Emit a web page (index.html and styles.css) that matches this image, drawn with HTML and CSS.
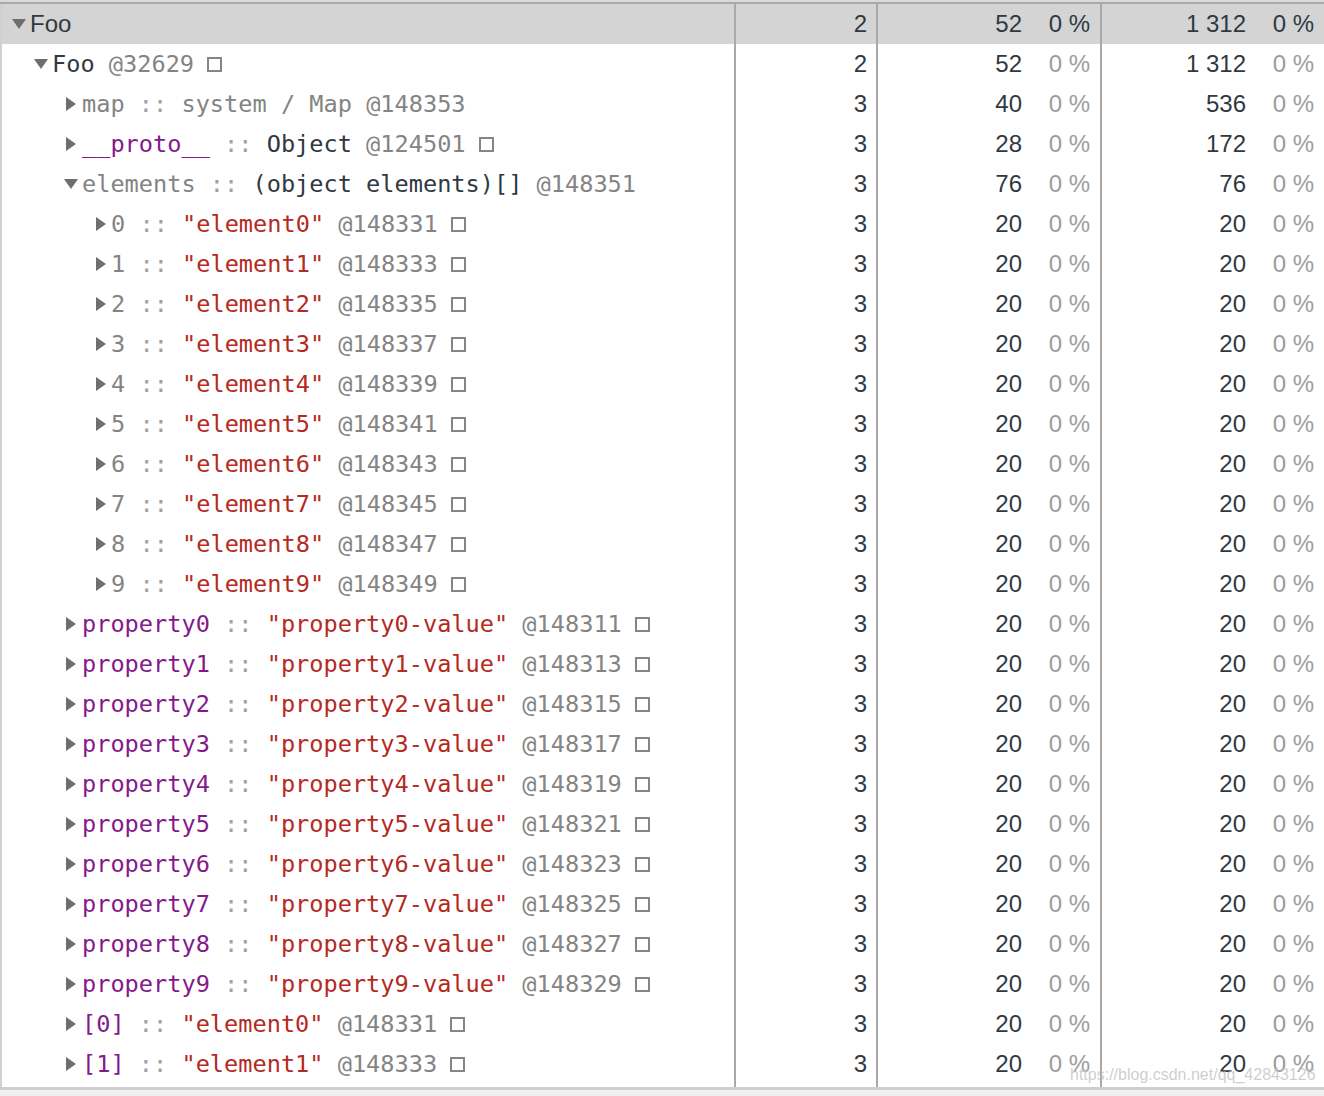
FILE: index.html
```html
<!DOCTYPE html>
<html>
<head>
<meta charset="utf-8">
<link rel="stylesheet" href="styles.css">
</head>
<body>
<div class="page">
  <div class="topline"></div>
  <div class="grid">
    <div class="row sel">
      <div class="name l0"><span class="tri down"><svg width="14" height="10" viewBox="0 0 14 10"><path d="M0 0H14L7 10Z"/></svg></span><span class="sans">Foo</span></div>
      <div class="num">2</div>
      <div class="num"><span>52</span><span class="pct">0 %</span></div>
      <div class="num"><span>1 312</span><span class="pct">0 %</span></div>
    </div>
    <div class="row">
      <div class="name l1"><span class="tri down"><svg width="14" height="10" viewBox="0 0 14 10"><path d="M0 0H14L7 10Z"/></svg></span><span class="dk">Foo</span><span class="gy"> @32629</span><span class="sq"></span></div>
      <div class="num">2</div>
      <div class="num"><span>52</span><span class="pct">0 %</span></div>
      <div class="num"><span>1 312</span><span class="pct">0 %</span></div>
    </div>
    <div class="row">
      <div class="name l2"><span class="tri right"><svg width="10" height="14" viewBox="0 0 10 14"><path d="M0 0L10 7L0 14Z"/></svg></span><span class="gy">map</span><span class="sep"> :: </span><span class="gy">system / Map</span><span class="gy"> @148353</span></div>
      <div class="num">3</div>
      <div class="num"><span>40</span><span class="pct">0 %</span></div>
      <div class="num"><span>536</span><span class="pct">0 %</span></div>
    </div>
    <div class="row">
      <div class="name l2"><span class="tri right"><svg width="10" height="14" viewBox="0 0 10 14"><path d="M0 0L10 7L0 14Z"/></svg></span><span class="pu">__proto__</span><span class="sep"> :: </span><span class="dk">Object</span><span class="gy"> @124501</span><span class="sq"></span></div>
      <div class="num">3</div>
      <div class="num"><span>28</span><span class="pct">0 %</span></div>
      <div class="num"><span>172</span><span class="pct">0 %</span></div>
    </div>
    <div class="row">
      <div class="name l2"><span class="tri down"><svg width="14" height="10" viewBox="0 0 14 10"><path d="M0 0H14L7 10Z"/></svg></span><span class="gy">elements</span><span class="sep"> :: </span><span class="dk">(object elements)[]</span><span class="gy"> @148351</span></div>
      <div class="num">3</div>
      <div class="num"><span>76</span><span class="pct">0 %</span></div>
      <div class="num"><span>76</span><span class="pct">0 %</span></div>
    </div>
    <div class="row">
      <div class="name l3"><span class="tri right"><svg width="10" height="14" viewBox="0 0 10 14"><path d="M0 0L10 7L0 14Z"/></svg></span><span class="gy">0</span><span class="sep"> :: </span><span class="rd">"element0"</span><span class="gy"> @148331</span><span class="sq"></span></div>
      <div class="num">3</div>
      <div class="num"><span>20</span><span class="pct">0 %</span></div>
      <div class="num"><span>20</span><span class="pct">0 %</span></div>
    </div>
    <div class="row">
      <div class="name l3"><span class="tri right"><svg width="10" height="14" viewBox="0 0 10 14"><path d="M0 0L10 7L0 14Z"/></svg></span><span class="gy">1</span><span class="sep"> :: </span><span class="rd">"element1"</span><span class="gy"> @148333</span><span class="sq"></span></div>
      <div class="num">3</div>
      <div class="num"><span>20</span><span class="pct">0 %</span></div>
      <div class="num"><span>20</span><span class="pct">0 %</span></div>
    </div>
    <div class="row">
      <div class="name l3"><span class="tri right"><svg width="10" height="14" viewBox="0 0 10 14"><path d="M0 0L10 7L0 14Z"/></svg></span><span class="gy">2</span><span class="sep"> :: </span><span class="rd">"element2"</span><span class="gy"> @148335</span><span class="sq"></span></div>
      <div class="num">3</div>
      <div class="num"><span>20</span><span class="pct">0 %</span></div>
      <div class="num"><span>20</span><span class="pct">0 %</span></div>
    </div>
    <div class="row">
      <div class="name l3"><span class="tri right"><svg width="10" height="14" viewBox="0 0 10 14"><path d="M0 0L10 7L0 14Z"/></svg></span><span class="gy">3</span><span class="sep"> :: </span><span class="rd">"element3"</span><span class="gy"> @148337</span><span class="sq"></span></div>
      <div class="num">3</div>
      <div class="num"><span>20</span><span class="pct">0 %</span></div>
      <div class="num"><span>20</span><span class="pct">0 %</span></div>
    </div>
    <div class="row">
      <div class="name l3"><span class="tri right"><svg width="10" height="14" viewBox="0 0 10 14"><path d="M0 0L10 7L0 14Z"/></svg></span><span class="gy">4</span><span class="sep"> :: </span><span class="rd">"element4"</span><span class="gy"> @148339</span><span class="sq"></span></div>
      <div class="num">3</div>
      <div class="num"><span>20</span><span class="pct">0 %</span></div>
      <div class="num"><span>20</span><span class="pct">0 %</span></div>
    </div>
    <div class="row">
      <div class="name l3"><span class="tri right"><svg width="10" height="14" viewBox="0 0 10 14"><path d="M0 0L10 7L0 14Z"/></svg></span><span class="gy">5</span><span class="sep"> :: </span><span class="rd">"element5"</span><span class="gy"> @148341</span><span class="sq"></span></div>
      <div class="num">3</div>
      <div class="num"><span>20</span><span class="pct">0 %</span></div>
      <div class="num"><span>20</span><span class="pct">0 %</span></div>
    </div>
    <div class="row">
      <div class="name l3"><span class="tri right"><svg width="10" height="14" viewBox="0 0 10 14"><path d="M0 0L10 7L0 14Z"/></svg></span><span class="gy">6</span><span class="sep"> :: </span><span class="rd">"element6"</span><span class="gy"> @148343</span><span class="sq"></span></div>
      <div class="num">3</div>
      <div class="num"><span>20</span><span class="pct">0 %</span></div>
      <div class="num"><span>20</span><span class="pct">0 %</span></div>
    </div>
    <div class="row">
      <div class="name l3"><span class="tri right"><svg width="10" height="14" viewBox="0 0 10 14"><path d="M0 0L10 7L0 14Z"/></svg></span><span class="gy">7</span><span class="sep"> :: </span><span class="rd">"element7"</span><span class="gy"> @148345</span><span class="sq"></span></div>
      <div class="num">3</div>
      <div class="num"><span>20</span><span class="pct">0 %</span></div>
      <div class="num"><span>20</span><span class="pct">0 %</span></div>
    </div>
    <div class="row">
      <div class="name l3"><span class="tri right"><svg width="10" height="14" viewBox="0 0 10 14"><path d="M0 0L10 7L0 14Z"/></svg></span><span class="gy">8</span><span class="sep"> :: </span><span class="rd">"element8"</span><span class="gy"> @148347</span><span class="sq"></span></div>
      <div class="num">3</div>
      <div class="num"><span>20</span><span class="pct">0 %</span></div>
      <div class="num"><span>20</span><span class="pct">0 %</span></div>
    </div>
    <div class="row">
      <div class="name l3"><span class="tri right"><svg width="10" height="14" viewBox="0 0 10 14"><path d="M0 0L10 7L0 14Z"/></svg></span><span class="gy">9</span><span class="sep"> :: </span><span class="rd">"element9"</span><span class="gy"> @148349</span><span class="sq"></span></div>
      <div class="num">3</div>
      <div class="num"><span>20</span><span class="pct">0 %</span></div>
      <div class="num"><span>20</span><span class="pct">0 %</span></div>
    </div>
    <div class="row">
      <div class="name l2"><span class="tri right"><svg width="10" height="14" viewBox="0 0 10 14"><path d="M0 0L10 7L0 14Z"/></svg></span><span class="pu">property0</span><span class="sep"> :: </span><span class="rd">"property0-value"</span><span class="gy"> @148311</span><span class="sq"></span></div>
      <div class="num">3</div>
      <div class="num"><span>20</span><span class="pct">0 %</span></div>
      <div class="num"><span>20</span><span class="pct">0 %</span></div>
    </div>
    <div class="row">
      <div class="name l2"><span class="tri right"><svg width="10" height="14" viewBox="0 0 10 14"><path d="M0 0L10 7L0 14Z"/></svg></span><span class="pu">property1</span><span class="sep"> :: </span><span class="rd">"property1-value"</span><span class="gy"> @148313</span><span class="sq"></span></div>
      <div class="num">3</div>
      <div class="num"><span>20</span><span class="pct">0 %</span></div>
      <div class="num"><span>20</span><span class="pct">0 %</span></div>
    </div>
    <div class="row">
      <div class="name l2"><span class="tri right"><svg width="10" height="14" viewBox="0 0 10 14"><path d="M0 0L10 7L0 14Z"/></svg></span><span class="pu">property2</span><span class="sep"> :: </span><span class="rd">"property2-value"</span><span class="gy"> @148315</span><span class="sq"></span></div>
      <div class="num">3</div>
      <div class="num"><span>20</span><span class="pct">0 %</span></div>
      <div class="num"><span>20</span><span class="pct">0 %</span></div>
    </div>
    <div class="row">
      <div class="name l2"><span class="tri right"><svg width="10" height="14" viewBox="0 0 10 14"><path d="M0 0L10 7L0 14Z"/></svg></span><span class="pu">property3</span><span class="sep"> :: </span><span class="rd">"property3-value"</span><span class="gy"> @148317</span><span class="sq"></span></div>
      <div class="num">3</div>
      <div class="num"><span>20</span><span class="pct">0 %</span></div>
      <div class="num"><span>20</span><span class="pct">0 %</span></div>
    </div>
    <div class="row">
      <div class="name l2"><span class="tri right"><svg width="10" height="14" viewBox="0 0 10 14"><path d="M0 0L10 7L0 14Z"/></svg></span><span class="pu">property4</span><span class="sep"> :: </span><span class="rd">"property4-value"</span><span class="gy"> @148319</span><span class="sq"></span></div>
      <div class="num">3</div>
      <div class="num"><span>20</span><span class="pct">0 %</span></div>
      <div class="num"><span>20</span><span class="pct">0 %</span></div>
    </div>
    <div class="row">
      <div class="name l2"><span class="tri right"><svg width="10" height="14" viewBox="0 0 10 14"><path d="M0 0L10 7L0 14Z"/></svg></span><span class="pu">property5</span><span class="sep"> :: </span><span class="rd">"property5-value"</span><span class="gy"> @148321</span><span class="sq"></span></div>
      <div class="num">3</div>
      <div class="num"><span>20</span><span class="pct">0 %</span></div>
      <div class="num"><span>20</span><span class="pct">0 %</span></div>
    </div>
    <div class="row">
      <div class="name l2"><span class="tri right"><svg width="10" height="14" viewBox="0 0 10 14"><path d="M0 0L10 7L0 14Z"/></svg></span><span class="pu">property6</span><span class="sep"> :: </span><span class="rd">"property6-value"</span><span class="gy"> @148323</span><span class="sq"></span></div>
      <div class="num">3</div>
      <div class="num"><span>20</span><span class="pct">0 %</span></div>
      <div class="num"><span>20</span><span class="pct">0 %</span></div>
    </div>
    <div class="row">
      <div class="name l2"><span class="tri right"><svg width="10" height="14" viewBox="0 0 10 14"><path d="M0 0L10 7L0 14Z"/></svg></span><span class="pu">property7</span><span class="sep"> :: </span><span class="rd">"property7-value"</span><span class="gy"> @148325</span><span class="sq"></span></div>
      <div class="num">3</div>
      <div class="num"><span>20</span><span class="pct">0 %</span></div>
      <div class="num"><span>20</span><span class="pct">0 %</span></div>
    </div>
    <div class="row">
      <div class="name l2"><span class="tri right"><svg width="10" height="14" viewBox="0 0 10 14"><path d="M0 0L10 7L0 14Z"/></svg></span><span class="pu">property8</span><span class="sep"> :: </span><span class="rd">"property8-value"</span><span class="gy"> @148327</span><span class="sq"></span></div>
      <div class="num">3</div>
      <div class="num"><span>20</span><span class="pct">0 %</span></div>
      <div class="num"><span>20</span><span class="pct">0 %</span></div>
    </div>
    <div class="row">
      <div class="name l2"><span class="tri right"><svg width="10" height="14" viewBox="0 0 10 14"><path d="M0 0L10 7L0 14Z"/></svg></span><span class="pu">property9</span><span class="sep"> :: </span><span class="rd">"property9-value"</span><span class="gy"> @148329</span><span class="sq"></span></div>
      <div class="num">3</div>
      <div class="num"><span>20</span><span class="pct">0 %</span></div>
      <div class="num"><span>20</span><span class="pct">0 %</span></div>
    </div>
    <div class="row">
      <div class="name l2"><span class="tri right"><svg width="10" height="14" viewBox="0 0 10 14"><path d="M0 0L10 7L0 14Z"/></svg></span><span class="pu">[0]</span><span class="sep"> :: </span><span class="rd">"element0"</span><span class="gy"> @148331</span><span class="sq"></span></div>
      <div class="num">3</div>
      <div class="num"><span>20</span><span class="pct">0 %</span></div>
      <div class="num"><span>20</span><span class="pct">0 %</span></div>
    </div>
    <div class="row">
      <div class="name l2"><span class="tri right"><svg width="10" height="14" viewBox="0 0 10 14"><path d="M0 0L10 7L0 14Z"/></svg></span><span class="pu">[1]</span><span class="sep"> :: </span><span class="rd">"element1"</span><span class="gy"> @148333</span><span class="sq"></span></div>
      <div class="num">3</div>
      <div class="num"><span>20</span><span class="pct">0 %</span></div>
      <div class="num"><span>20</span><span class="pct">0 %</span></div>
    </div>
    <div class="row filler">
      <div class="name"></div>
      <div class="num"></div>
      <div class="num"></div>
      <div class="num"></div>
    </div>
  </div>
  <div class="bottom"></div>
  <div class="watermark">https://blog.csdn.net/qq_42843126</div>
</div>
</body>
</html>
```

FILE: styles.css
```css
html, body {
  margin: 0;
  padding: 0;
  background: #ffffff;
}
.page {
  position: relative;
  width: 1324px;
  height: 1096px;
  overflow: hidden;
  background: #f0f0f0;
}
.topline {
  height: 2px;
  background: #dadada;
  border-bottom: 2px solid #a9a9a9;
}
.grid {
  display: flex;
  flex-direction: column;
  background: #ffffff;
}
.row {
  display: grid;
  grid-template-columns: 734px 142px 224px 224px;
  height: 40px;
}
.row.filler {
  height: 3px;
}
.row.sel {
  background: #d4d4d4;
}
.name {
  border-left: 2px solid #d0d0d0;
  display: flex;
  align-items: center;
  white-space: pre;
  font-family: "DejaVu Sans Mono", monospace;
  font-size: 23.6px;
  color: #303942;
}
.num {
  border-left: 2px solid #a9a9a9;
  display: flex;
  align-items: center;
  justify-content: flex-end;
  padding-right: 9px;
  font-family: "Liberation Sans", Arial, sans-serif;
  font-size: 24px;
  color: #303942;
  white-space: pre;
}
.pct {
  display: inline-block;
  width: 68px;
  text-align: right;
  color: #9c9c9c;
  padding-right: 1px;
}
.sel .pct {
  color: #303942;
}
.tri {
  display: inline-flex;
  align-items: center;
  width: 16px;
  flex: none;
}
.tri svg {
  display: block;
  fill: #6e6e6e;
}
.l0 { padding-left: 10px; }
.l0 .tri.down { width: 18px; }
.l1 { padding-left: 32px; }
.l1 .tri.down { width: 18px; }
.l2 { padding-left: 62px; }
.l2 .tri.down { width: 18px; }
.l2 .tri.right { width: 18px; padding-left: 2px; box-sizing: border-box; }
.l3 { padding-left: 92px; }
.l3 .tri.right { width: 17px; padding-left: 2px; box-sizing: border-box; }
.sans {
  font-family: "Liberation Sans", Arial, sans-serif;
  font-size: 24px;
  color: #303942;
}
.dk { color: #303942; }
.gy { color: #848484; }
.sep { color: #a0a0a0; }
.pu { color: #85198c; }
.rd { color: #b52a1f; }
.sq {
  display: inline-block;
  width: 11px;
  height: 11px;
  border: 2px solid #858585;
  margin-left: 13px;
  flex: none;
}
.bottom {
  height: 3px;
  background: #cfcfcf;
}
.watermark {
  position: absolute;
  left: 1070px;
  top: 1066px;
  font-family: "Liberation Sans", Arial, sans-serif;
  font-size: 16px;
  color: rgba(190, 190, 190, 0.75);
  white-space: nowrap;
}
```
